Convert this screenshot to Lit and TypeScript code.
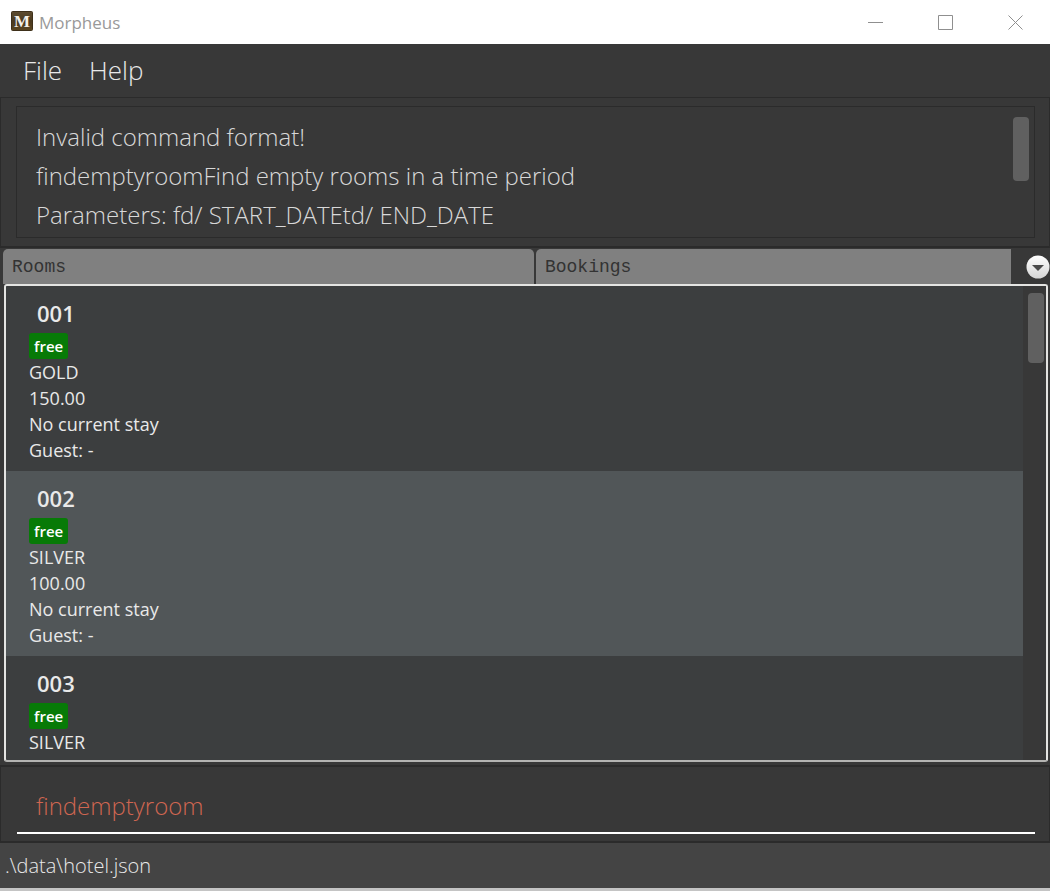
import { LitElement, html, css, nothing } from "lit";
import { customElement, property, state } from "lit/decorators.js";
import { classMap } from "lit/directives/class-map.js";

interface Room {
  number: string;
  status: string;
  tier: string;
  price?: string;
  stay?: string;
  guest?: string;
}

const ROOMS: Room[] = [
  { number: "001", status: "free", tier: "GOLD", price: "150.00", stay: "No current stay", guest: "-" },
  { number: "002", status: "free", tier: "SILVER", price: "100.00", stay: "No current stay", guest: "-" },
  { number: "003", status: "free", tier: "SILVER" },
];

const RESULT = [
  "Invalid command format!",
  "findemptyroomFind empty rooms in a time period",
  "Parameters: fd/ START_DATEtd/ END_DATE",
].join("\n");

@customElement("title-bar")
class TitleBar extends LitElement {
  static styles = css`
    :host {
      display: flex;
      align-items: center;
      height: 44px;
      flex: none;
      background: #ffffff;
      color: #999999;
      font-size: 17px;
    }
    .logo {
      margin: 0 6px 2px 11px;
    }
    .name {
      flex: 1;
    }
    .control {
      display: grid;
      place-items: center;
      width: 70px;
      height: 44px;
      padding: 0;
      border: 0;
      background: none;
    }
  `;

  render() {
    return html`
      <svg class="logo" width="22" height="20" viewBox="0 0 22 20" aria-hidden="true">
        <defs>
          <linearGradient id="wood" x1="0" y1="0" x2="0" y2="1">
            <stop offset="0" stop-color="#5d4c30" />
            <stop offset="0.5" stop-color="#4b3a20" />
            <stop offset="1" stop-color="#5a4520" />
          </linearGradient>
        </defs>
        <rect x="0.5" y="0.5" width="21" height="19" rx="1" fill="url(#wood)" stroke="#3e301a" />
        <text x="11" y="16" text-anchor="middle" font-family="Liberation Serif, serif" font-weight="700" font-size="17" fill="#f4f1ea">M</text>
      </svg>
      <span class="name">Morpheus</span>
      <button class="control" aria-label="Minimize">
        <svg width="15" height="15" stroke="#8f8f8f" fill="none"><path d="M0 7.5h15" /></svg>
      </button>
      <button class="control" aria-label="Maximize">
        <svg width="15" height="15" stroke="#8f8f8f" fill="none"><path d="M.5 .5h14v14h-14z" /></svg>
      </button>
      <button class="control" aria-label="Close">
        <svg width="15" height="15" stroke="#8f8f8f" fill="none"><path d="M.5 .5l14 14M14.5 .5l-14 14" /></svg>
      </button>
    `;
  }
}

@customElement("room-card")
class RoomCard extends LitElement {
  @property({ attribute: false }) room!: Room;

  static styles = css`
    :host {
      display: block;
      padding: 12px 23px 8px;
      font-size: 18px;
      line-height: 26px;
    }
    .number {
      margin: 0 0 5px 8px;
      font-size: 22px;
      font-weight: 600;
      line-height: 30px;
    }
    .tag {
      display: block;
      width: fit-content;
      padding: 0 5px;
      border-radius: 3px;
      background: #077a07;
      color: #ffffff;
      font-size: 15px;
      font-weight: 600;
    }
    .line {
      margin: 0;
    }
  `;

  private line(text?: string) {
    return text ? html`<p class="line">${text}</p>` : nothing;
  }

  render() {
    const r = this.room;
    return html`
      <h2 class="number">${r.number}</h2>
      <span class="tag">${r.status}</span>
      ${this.line(r.tier)} ${this.line(r.price)} ${this.line(r.stay)}
      ${this.line(r.guest && `Guest: ${r.guest}`)}
    `;
  }
}

@customElement("app-root")
class AppRoot extends LitElement {
  @state() private tab = "Rooms";
  @state() private command = "findemptyroom";

  static styles = css`
    :host {
      display: flex;
      flex-direction: column;
      height: 100vh;
      background: #383838;
      color: #e9e9e9;
      font-family: "Open Sans", "Noto Sans", sans-serif;
      --edge: #2b2b2b;
    }
    * {
      box-sizing: border-box;
    }
    button,
    input,
    textarea {
      font: inherit;
      color: inherit;
    }
    .menu {
      display: flex;
      flex: none;
      gap: 27px;
      height: 53px;
      padding: 0 23px 2px;
    }
    .menu-item {
      padding: 0;
      border: 0;
      background: none;
      font-size: 26px;
      font-weight: 300;
    }
    .pane {
      flex: none;
      border: 1px solid var(--edge);
    }
    .result-pane {
      padding: 8px 14px 8px 15px;
      border-bottom-width: 2px;
    }
    .result {
      display: flex;
      height: 132px;
      padding: 10px 5px 0 19px;
      border: 1px solid var(--edge);
    }
    .result-text {
      flex: 1;
      height: 117px;
      padding: 0;
      border: 0;
      outline: 0;
      resize: none;
      overflow: hidden;
      background: none;
      color: #d8d8d8;
      font-size: 24px;
      font-weight: 300;
      line-height: 39px;
    }
    .thumb {
      width: 16px;
      height: 64px;
      border-radius: 4px;
      background: #606060;
    }
    .tabs {
      display: flex;
      flex: none;
      height: 35px;
      margin-top: 1px;
      padding-left: 3px;
      gap: 2px;
    }
    .tab {
      min-width: 0;
      padding: 0 9px;
      border: 0;
      border-radius: 5px 5px 0 0;
      background: #808080;
      color: #333333;
      font-family: "Liberation Mono", monospace;
      font-size: 18px;
      text-align: left;
    }
    .tab-rooms {
      flex: 532;
    }
    .tab-bookings {
      flex: 474;
      border-radius: 5px 0 0 0;
    }
    .more {
      display: grid;
      place-items: center;
      flex: none;
      width: 37px;
      padding: 0 0 0 12px;
      border: 0;
      background: none;
    }
    .list {
      display: flex;
      flex: 1;
      min-height: 0;
      margin: 0 2px 0 4px;
      border: 2px solid #e4e4e2;
      border-bottom-color: #b4b4b2;
      border-radius: 3px;
      background: #3c3e3f;
    }
    .rooms {
      flex: 1;
      overflow: hidden;
    }
    .shaded {
      background: #515658;
    }
    .scroll {
      width: 23px;
      padding: 7px 2px 0 5px;
      background: #383838;
    }
    .list-thumb {
      height: 70px;
    }
    .command-pane {
      margin-top: 3px;
      padding: 12px 14px 7px 16px;
      border-top-width: 2px;
      border-bottom-width: 2px;
    }
    .command {
      display: block;
      width: 100%;
      height: 55px;
      padding: 0 19px;
      border: 0;
      border-bottom: 2px solid #ffffff;
      outline: 0;
      background: none;
      color: #d06651;
      font-size: 24px;
      font-weight: 300;
    }
    .status {
      flex: none;
      height: 48px;
      padding: 0 5px;
      border-bottom: 3px solid #c4c4c4;
      background: #444444;
      font-size: 20px;
      font-weight: 300;
      line-height: 46px;
    }
  `;

  private tabButton(name: string) {
    const classes = {
      tab: true,
      "tab-rooms": name === "Rooms",
      "tab-bookings": name === "Bookings",
    };
    return html`<button
      class=${classMap(classes)}
      role="tab"
      aria-selected=${this.tab === name}
      @click=${() => (this.tab = name)}
    >${name}</button>`;
  }

  render() {
    return html`
      <title-bar></title-bar>
      <nav class="menu">
        <button class="menu-item">File</button>
        <button class="menu-item">Help</button>
      </nav>
      <section class="pane result-pane">
        <div class="result">
          <textarea class="result-text" aria-label="Result" readonly .value=${RESULT}></textarea>
          <div class="thumb"></div>
        </div>
      </section>
      <div class="tabs" role="tablist">
        ${this.tabButton("Rooms")} ${this.tabButton("Bookings")}
        <button class="more" aria-label="More tabs">
          <svg width="24" height="24" viewBox="0 0 24 24">
            <defs>
              <linearGradient id="disc" x1="0" y1="0" x2="0" y2="1">
                <stop offset="0" stop-color="#ffffff" />
                <stop offset="1" stop-color="#d6d6d6" />
              </linearGradient>
            </defs>
            <circle cx="12" cy="12" r="11.5" fill="url(#disc)" />
            <path d="M6 10h12l-6 6z" fill="#4a4a4a" />
          </svg>
        </button>
      </div>
      <main class="list">
        <div class="rooms">
          ${ROOMS.map(
            (room, i) => html`<room-card class=${classMap({ shaded: i % 2 === 1 })} .room=${room}></room-card>`
          )}
        </div>
        <div class="scroll"><div class="thumb list-thumb"></div></div>
      </main>
      <section class="pane command-pane">
        <input
          class="command"
          aria-label="Command"
          .value=${this.command}
          @input=${(e: Event) => (this.command = (e.target as HTMLInputElement).value)}
        />
      </section>
      <footer class="status">.\\data\\hotel.json</footer>
    `;
  }
}
